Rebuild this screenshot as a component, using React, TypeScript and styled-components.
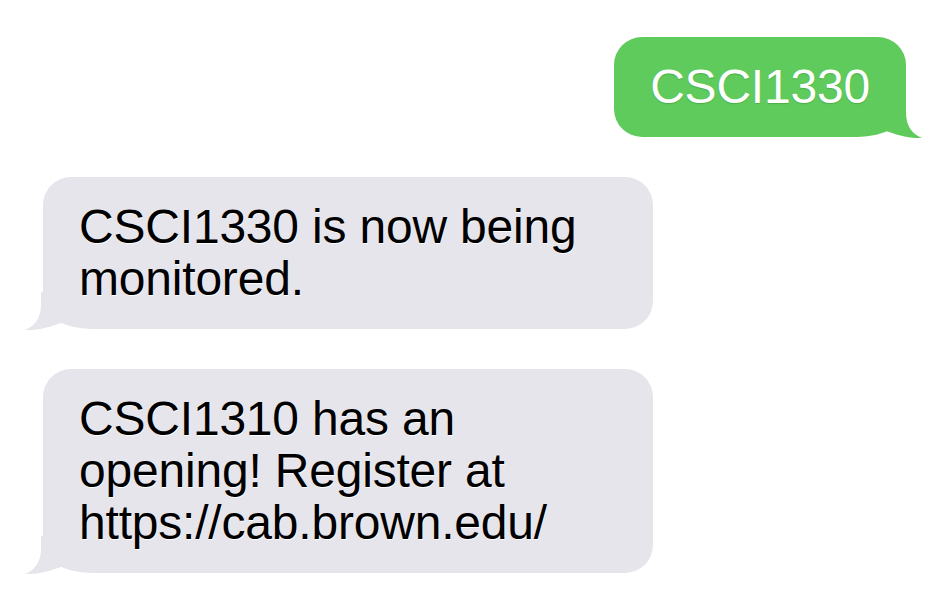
import React from "react";
import styled, { createGlobalStyle } from "styled-components";

const GlobalStyle = createGlobalStyle`
  html, body {
    margin: 0;
    padding: 0;
    background: #ffffff;
  }
  body {
    font-family: "Liberation Sans", Arial, Helvetica, sans-serif;
  }
`;

const Thread = styled.div`
  width: 936px;
  height: 614px;
  box-sizing: border-box;
  padding: 37px 30px 0 43px;
  display: flex;
  flex-direction: column;
  gap: 40px;
`;

const Row = styled.div<{ $sent?: boolean }>`
  display: flex;
  justify-content: ${(p) => (p.$sent ? "flex-end" : "flex-start")};
`;

const Bubble = styled.div<{ $sent?: boolean }>`
  position: relative;
  max-width: 610px;
  box-sizing: border-box;
  padding: 24px 36px;
  border-radius: 28px;
  ${(p) =>
    p.$sent
      ? "border-bottom-right-radius: 48px 28px;"
      : "border-bottom-left-radius: 48px 28px;"}
  background: ${(p) => (p.$sent ? "#5fcb5c" : "#e6e5eb")};
  color: ${(p) => (p.$sent ? "#ffffff" : "#000000")};
  font-size: 48px;
  line-height: 52px;
  letter-spacing: -0.2px;
  text-shadow: ${(p) =>
    p.$sent
      ? "0 1px 1px rgba(40, 120, 40, 0.35)"
      : "0.5px 1px 0.5px rgba(255, 255, 255, 0.95)"};
`;

const TailSvg = styled.svg<{ $sent?: boolean }>`
  position: absolute;
  bottom: -1px;
  width: 44px;
  height: 38px;
  ${(p) =>
    p.$sent
      ? "right: -16px;"
      : "left: -18px; transform: scaleX(-1);"}
`;

const Tail: React.FC<{ sent?: boolean; color: string }> = ({ sent, color }) => (
  <TailSvg $sent={sent} viewBox="0 0 44 38" aria-hidden="true">
    <path
      d="M6 30 C19 35.5 33 38.6 44 38 C34 34 28 26 28 12 L28 0 L6 0 Z"
      fill={color}
    />
  </TailSvg>
);

const Message: React.FC<{ sent?: boolean; children: React.ReactNode }> = ({
  sent,
  children,
}) => (
  <Row $sent={sent}>
    <Bubble $sent={sent}>
      {children}
      <Tail sent={sent} color={sent ? "#5fcb5c" : "#e6e5eb"} />
    </Bubble>
  </Row>
);

export default function App() {
  return (
    <>
      <GlobalStyle />
      <Thread>
        <Message sent>CSCI1330</Message>
        <Message>CSCI1330 is now being monitored.</Message>
        <Message>CSCI1310 has an opening! Register at https://cab.brown.edu/</Message>
      </Thread>
    </>
  );
}
